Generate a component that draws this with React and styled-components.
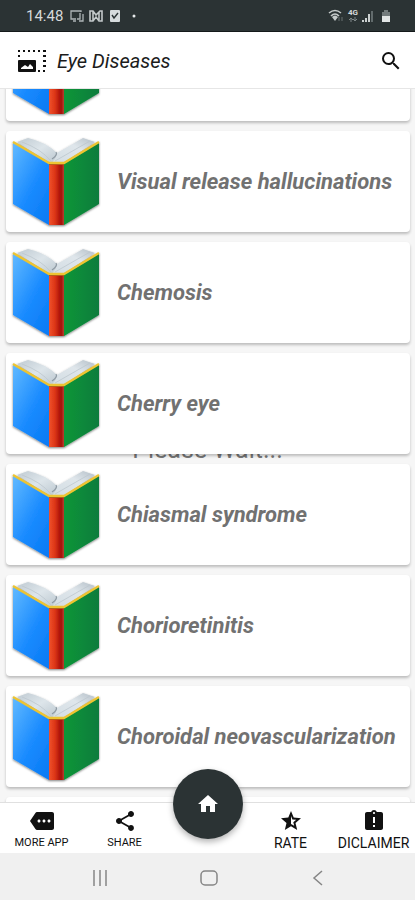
import React, { useLayoutEffect, useRef, useState } from "react";
import styled, { createGlobalStyle } from "styled-components";
import {
    MdAssignmentLate,
    MdHome,
    MdMore,
    MdSearch,
    MdShare,
} from "react-icons/md";

const GlobalStyle = createGlobalStyle`
    * {
        box-sizing: border-box;
    }
    body {
        margin: 0;
        font-family: Roboto, sans-serif;
        background: #f6f6f6;
    }
    button {
        border: none;
        background: none;
        padding: 0;
        font-family: inherit;
        cursor: pointer;
    }
`;

const Screen = styled.div`
    height: 100vh;
    display: flex;
    flex-direction: column;
`;

const StatusBar = styled.div`
    display: flex;
    flex-shrink: 0;
    justify-content: space-between;
    align-items: center;
    height: 32px;
    padding: 0 23px 0 26px;
    background: #2b3334;
    border-bottom: 1px solid #14191a;
    color: #d5d9da;
    font-size: 15px;
`;

const StatusGroup = styled.div`
    display: flex;
    align-items: center;
    gap: ${(props) => props.$gap};
`;

const Header = styled.header`
    display: flex;
    flex-shrink: 0;
    align-items: center;
    gap: 10px;
    height: 57px;
    padding: 2px 12px 0 17px;
    background: #fff;
    border-bottom: 1px solid #e6e6e6;
`;

const Title = styled.h1`
    flex: 1;
    margin: 0;
    color: #1c1c1c;
    font-size: 20px;
    font-style: italic;
    font-weight: 400;
`;

const IconButton = styled.button`
    display: flex;
    color: #111;
    font-size: 24px;
`;

const Content = styled.main`
    position: relative;
    flex: 1;
    min-height: 0;
    background: #f6f6f6;
`;

const Loading = styled.div`
    position: absolute;
    inset: 0;
    display: flex;
    justify-content: center;
    align-items: center;
    padding-top: 8px;
    color: #777;
    font-size: 25px;
`;

const List = styled.ul`
    position: relative;
    display: flex;
    flex-direction: column;
    gap: 10px;
    height: 100%;
    margin: 0;
    padding: 6px 5px 6px 6px;
    list-style: none;
    overflow-y: auto;
    scrollbar-width: none;
`;

const Card = styled.li`
    flex-shrink: 0;
    height: 101px;
    background: #fff;
    border-radius: 4px;
    box-shadow: 0 2px 3px rgba(0, 0, 0, 0.24);
`;

const CardButton = styled.button`
    display: flex;
    align-items: center;
    gap: 16px;
    width: 100%;
    height: 100%;
    padding-left: 5px;
    color: #717171;
    font-size: 22px;
    font-style: italic;
    font-weight: 700;
    text-align: left;
    white-space: nowrap;
`;

const BottomBar = styled.nav`
    display: grid;
    flex-shrink: 0;
    grid-template-columns: repeat(5, 1fr);
    height: 51px;
    background: #fff;
    border-top: 1px solid #e0e0e0;
    position: relative;
`;

const NavItem = styled.button`
    display: flex;
    flex-direction: column;
    align-items: center;
    justify-content: space-between;
    padding: 6px 0 2px;
    color: #111;
    font-size: ${(props) => props.$size};
    line-height: 16px;
    white-space: nowrap;

    svg {
        width: 24px;
        height: 24px;
    }
`;

const HomeSlot = styled.div`
    position: relative;
`;

const HomeButton = styled.button`
    position: absolute;
    top: -34px;
    left: 50%;
    display: flex;
    justify-content: center;
    align-items: center;
    width: 70px;
    height: 70px;
    margin-left: -35px;
    border-radius: 50%;
    background: #2b3334;
    box-shadow: 0 3px 6px rgba(0, 0, 0, 0.3);
    color: #fff;
    font-size: 24px;
`;

const SystemBar = styled.div`
    display: flex;
    flex-shrink: 0;
    justify-content: center;
    align-items: center;
    gap: 92px;
    height: 47px;
    padding: 2px 0 0 2px;
    background: #f0f0f0;
`;

const SystemButton = styled.button`
    display: flex;
    color: #858585;
`;

const diseases = [
    "Charles Bonnet syndrome",
    "Visual release hallucinations",
    "Chemosis",
    "Cherry eye",
    "Chiasmal syndrome",
    "Chorioretinitis",
    "Choroidal neovascularization",
    "Choroideremia",
];

const START_SCROLL = 75;

function BookIcon() {
    return (
        <svg width="90" height="92" viewBox="0 0 90 92" aria-hidden="true">
            <defs>
                <linearGradient id="blue" x1="0" y1="0" x2="0.8" y2="1">
                    <stop offset="0" stopColor="#62baff" />
                    <stop offset="0.6" stopColor="#1a8bff" />
                    <stop offset="1" stopColor="#0a7cf5" />
                </linearGradient>
                <linearGradient id="green" x1="0" y1="0" x2="1" y2="0">
                    <stop offset="0" stopColor="#079638" />
                    <stop offset="1" stopColor="#087c3c" />
                </linearGradient>
                <linearGradient id="red" x1="0" y1="0" x2="1" y2="0">
                    <stop offset="0" stopColor="#f0522c" />
                    <stop offset="0.4" stopColor="#dc3517" />
                    <stop offset="0.8" stopColor="#a30f08" />
                    <stop offset="1" stopColor="#b8402f" />
                </linearGradient>
                <linearGradient id="page" x1="0" y1="0" x2="1" y2="1">
                    <stop offset="0" stopColor="#c0cbd3" />
                    <stop offset="0.5" stopColor="#dde5ea" />
                    <stop offset="1" stopColor="#bcc8d0" />
                </linearGradient>
                <linearGradient id="pageRight" x1="0" y1="1" x2="1" y2="0">
                    <stop offset="0" stopColor="#d3dde3" />
                    <stop offset="0.6" stopColor="#dfe6eb" />
                    <stop offset="1" stopColor="#b4bfc8" />
                </linearGradient>
                <filter id="shade" x="-10%" y="-10%" width="120%" height="120%">
                    <feDropShadow
                        dx="0"
                        dy="1"
                        stdDeviation="1"
                        floodOpacity="0.5"
                    />
                </filter>
            </defs>
            <g filter="url(#shade)">
                <path d="M6 6 17 2Q35 6 46 17L42 27H39Z" fill="url(#page)" />
                <path d="M46 17 72 2 84 6 52 27H41Q45 22 46 17Z" fill="url(#pageRight)" />
                <path d="M11 6Q30 13 40 25" fill="none" stroke="#bcc7ce" strokeWidth="0.8" />
                <path d="M45 16Q47 19 41 23" fill="none" stroke="#8e9aa3" strokeWidth="1.2" />
                <path d="M44 25 79 5" fill="none" stroke="#bcc7ce" strokeWidth="0.8" />
                <path d="M2 6 38 27V89L2 68Z" fill="url(#blue)" />
                <path d="M53 27 88 6V68L53 89Z" fill="url(#green)" />
                <path d="M38 27H53V89H38Z" fill="url(#red)" />
                <path d="M2 6 38 27H53L88 6" fill="none" stroke="#edc431" strokeWidth="2.400" />
                <path d="M38 28.500H53" stroke="#b4601c" />
            </g>
        </svg>
    );
}

function GalleryIcon() {
    return (
        <svg width="30" height="24" viewBox="0 0 30 24" aria-hidden="true">
            <path
                d="M1 1H3V3H1ZM6 1H8V3H6ZM11 1H13V3H11ZM16 1H18V3H16ZM21 1H23V3H21ZM26 1H29V3H26ZM1 6H3V8H1ZM26 6H29V8H26ZM26 11H29V13H26ZM26 16H29V18H26ZM26 21H28V23H26ZM21 21H23V23H21Z"
                fill="#111"
            />
            <path
                fillRule="evenodd"
                d="M2 11H18Q19 11 19 12V22Q19 23 18 23H2Q1 23 1 22V12Q1 11 2 11ZM4 20H16V18L13 15 11 18 8 16 4 19Z"
                fill="#111"
            />
        </svg>
    );
}

function RateIcon() {
    return (
        <svg viewBox="0 0 24 24" aria-hidden="true">
            <path
                d="M12 2 14.700 8.600 22 9.200 16.500 14 18.200 21 12 17.300 5.800 21 7.500 14 2 9.200 9.300 8.600Z"
                fill="#111"
            />
            <path d="M12 7 13.400 10.400 17.200 10.700 14.300 13.200 15.200 16.800 12 15Z" fill="#fff" />
        </svg>
    );
}

function NotificationIcons() {
    return (
        <svg width="66" height="14" viewBox="0 0 66 14" aria-hidden="true">
            <g fill="none" stroke="#aeb5b6" strokeWidth="1.3">
                <path d="M6 10H1V2H11V3M3 12H6" />
                <path d="M7 10H10V4M9 12H13V5" />
            </g>
            <g fill="none" stroke="#c3c9ca" strokeWidth="1.6">
                <path d="M20 2H23L26 6 30 2H32V12H29L26 8 23 12H20ZM23 2V12M29 3V11" />
            </g>
            <rect x="40" y="1" width="10" height="12" rx="1" fill="#d7dcdd" />
            <path d="M42 6 44 9 48 4" fill="none" stroke="#2b3334" strokeWidth="1.4" />
            <circle cx="64" cy="7" r="1.500" fill="#e6e9ea" />
        </svg>
    );
}

function WifiIcon() {
    return (
        <svg width="16" height="14" viewBox="0 0 16 14" aria-hidden="true">
            <g fill="none" stroke="#c5caca" strokeWidth="1.6">
                <path d="M1 4Q7 -1 13 4M3 7Q7 3 11 7" />
            </g>
            <path d="M4 8Q7 5 10 8L7 12Z" fill="#c5caca" />
            <path d="M11 12V8M14 8V12" stroke="#687071" />
        </svg>
    );
}

const Network = styled.span`
    display: flex;
    flex-direction: column;
    align-items: center;
    font-size: 8px;
    font-weight: 700;
    line-height: 8px;
`;

function SignalIcons() {
    return (
        <svg width="30" height="14" viewBox="0 0 30 14" aria-hidden="true">
            <path d="M0 13V11H2V13ZM3 13V9H5V13ZM6 13V5H8V13Z" fill="#cbd0d0" />
            <path d="M9 13V2H11V13Z" fill="#626b6c" />
            <path d="M20 3H22V1H26V3H28V7H20Z" fill="#737b7c" />
            <path d="M20 7H28V13H20Z" fill="#e2e5e5" />
        </svg>
    );
}

function App() {
    const listRef = useRef(null);
    const [selected, setSelected] = useState(null);

    useLayoutEffect(() => {
        listRef.current.scrollTop = START_SCROLL;
    }, []);

    return (
        <Screen>
            <GlobalStyle />
            <StatusBar>
                <StatusGroup $gap="7px">
                    <span>14:48</span>
                    <NotificationIcons />
                </StatusGroup>
                <StatusGroup $gap="4px">
                    <WifiIcon />
                    <Network>
                        4G
                        <svg width="8" height="5" viewBox="0 0 8 5" aria-hidden="true">
                            <path d="M2 5V1M0 3 2 1 4 3M6 0V4M4 2 6 4 8 2" fill="none" stroke="#7e8687" />
                        </svg>
                    </Network>
                    <SignalIcons />
                </StatusGroup>
            </StatusBar>
            <Header>
                <GalleryIcon />
                <Title>Eye Diseases</Title>
                <IconButton aria-label="Search">
                    <MdSearch />
                </IconButton>
            </Header>
            <Content>
                <Loading>Please Wait...</Loading>
                <List ref={listRef}>
                    {diseases.map((name) => (
                        <Card key={name}>
                            <CardButton
                                aria-pressed={selected === name}
                                onClick={() => setSelected(name)}
                            >
                                <BookIcon />
                                {name}
                            </CardButton>
                        </Card>
                    ))}
                </List>
            </Content>
            <BottomBar>
                <NavItem $size="11px">
                    <MdMore />
                    MORE APP
                </NavItem>
                <NavItem $size="11px">
                    <MdShare />
                    SHARE
                </NavItem>
                <HomeSlot>
                    <HomeButton aria-label="Home">
                        <MdHome />
                    </HomeButton>
                </HomeSlot>
                <NavItem $size="14px">
                    <RateIcon />
                    RATE
                </NavItem>
                <NavItem $size="14px">
                    <MdAssignmentLate />
                    DICLAIMER
                </NavItem>
            </BottomBar>
            <SystemBar>
                <SystemButton aria-label="Recent apps">
                    <svg width="16" height="16" viewBox="0 0 16 16">
                        <path d="M2 0V16M8 0V16M14 0V16" stroke="currentColor" strokeWidth="1.500" />
                    </svg>
                </SystemButton>
                <SystemButton aria-label="Home screen">
                    <svg width="18" height="18" viewBox="0 0 18 18">
                        <rect x="1" y="2" width="16" height="14" rx="4" fill="none" stroke="currentColor" strokeWidth="1.500" />
                    </svg>
                </SystemButton>
                <SystemButton aria-label="Back">
                    <svg width="16" height="16" viewBox="0 0 16 16">
                        <path d="M12 1 4 8 12 15" fill="none" stroke="currentColor" strokeWidth="1.500" />
                    </svg>
                </SystemButton>
            </SystemBar>
        </Screen>
    );
}

export default App;
